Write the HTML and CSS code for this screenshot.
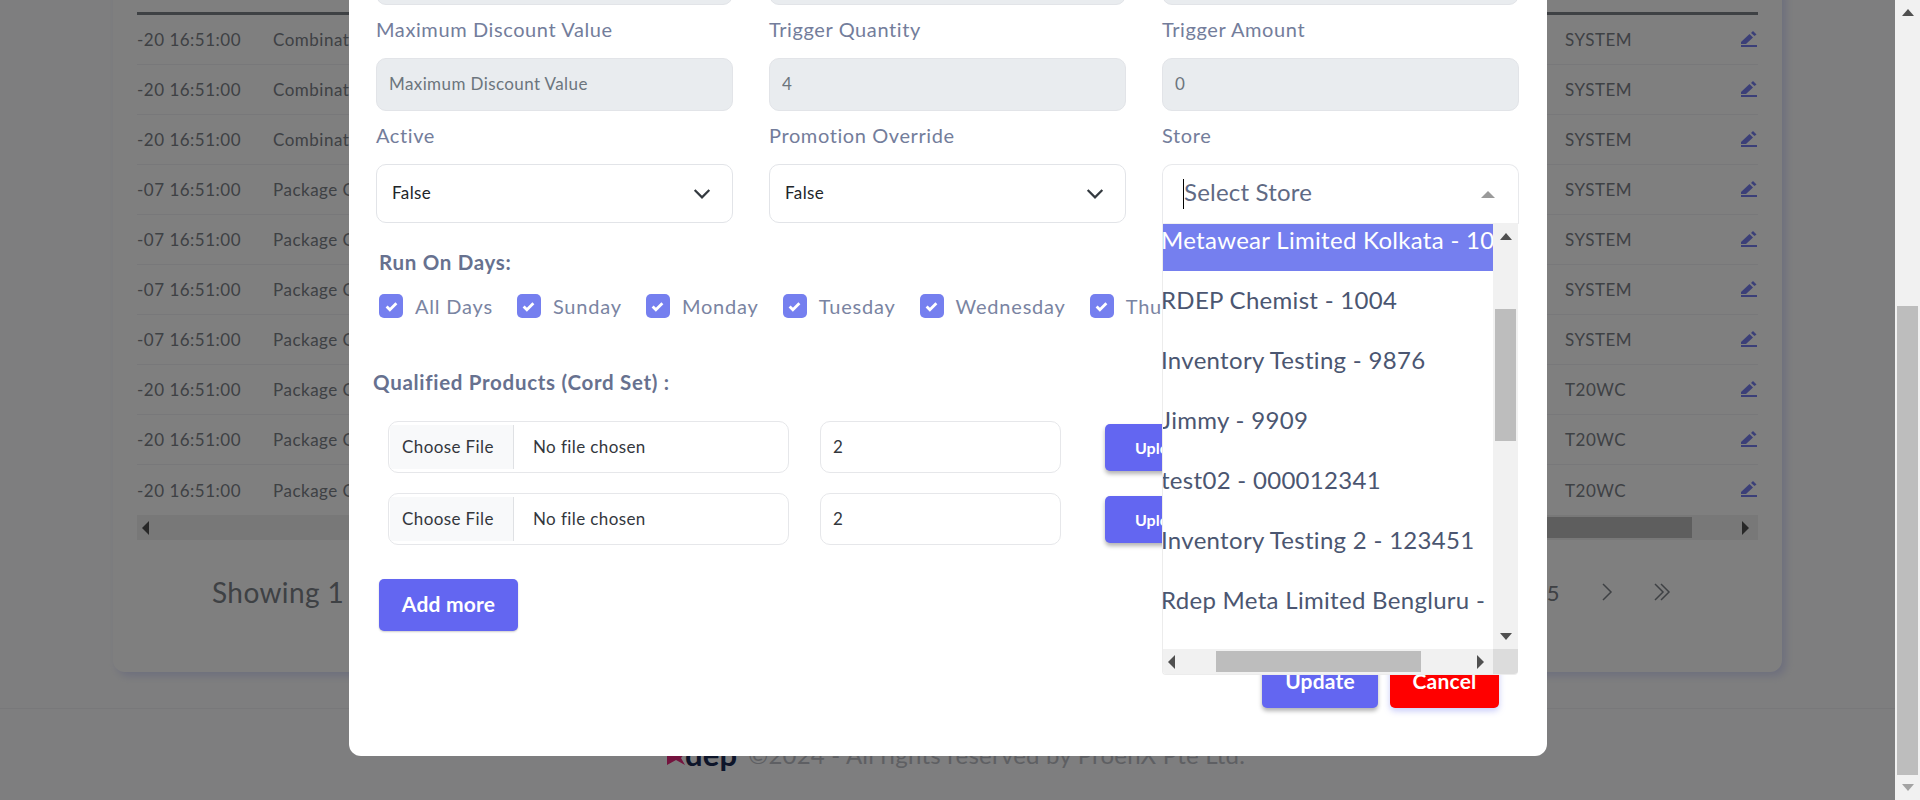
FILE: index.html
```html
<!DOCTYPE html>
<html lang="en">
<head>
<meta charset="utf-8">
<title>Promotions</title>
<link rel="stylesheet" href="styles.css">
</head>
<body>

<div class="page">
  <div class="main">

    <div class="card">
      <div class="table">
        <div class="row"><span class="c-date">-20 16:51:00</span><span class="c-type">Combination</span><span class="c-user">SYSTEM</span><svg class="edit" viewBox="0 0 16 16"><path d="M0 13V11L8.500 3 12 6.500 5 13Z"/><path d="M10 2 12 0 15.500 3.500 13.500 5Z"/><rect y="14" width="16" height="2"/></svg></div>
        <div class="row"><span class="c-date">-20 16:51:00</span><span class="c-type">Combination</span><span class="c-user">SYSTEM</span><svg class="edit" viewBox="0 0 16 16"><path d="M0 13V11L8.500 3 12 6.500 5 13Z"/><path d="M10 2 12 0 15.500 3.500 13.500 5Z"/><rect y="14" width="16" height="2"/></svg></div>
        <div class="row"><span class="c-date">-20 16:51:00</span><span class="c-type">Combination</span><span class="c-user">SYSTEM</span><svg class="edit" viewBox="0 0 16 16"><path d="M0 13V11L8.500 3 12 6.500 5 13Z"/><path d="M10 2 12 0 15.500 3.500 13.500 5Z"/><rect y="14" width="16" height="2"/></svg></div>
        <div class="row"><span class="c-date">-07 16:51:00</span><span class="c-type">Package Qty</span><span class="c-user">SYSTEM</span><svg class="edit" viewBox="0 0 16 16"><path d="M0 13V11L8.500 3 12 6.500 5 13Z"/><path d="M10 2 12 0 15.500 3.500 13.500 5Z"/><rect y="14" width="16" height="2"/></svg></div>
        <div class="row"><span class="c-date">-07 16:51:00</span><span class="c-type">Package Qty</span><span class="c-user">SYSTEM</span><svg class="edit" viewBox="0 0 16 16"><path d="M0 13V11L8.500 3 12 6.500 5 13Z"/><path d="M10 2 12 0 15.500 3.500 13.500 5Z"/><rect y="14" width="16" height="2"/></svg></div>
        <div class="row"><span class="c-date">-07 16:51:00</span><span class="c-type">Package Qty</span><span class="c-user">SYSTEM</span><svg class="edit" viewBox="0 0 16 16"><path d="M0 13V11L8.500 3 12 6.500 5 13Z"/><path d="M10 2 12 0 15.500 3.500 13.500 5Z"/><rect y="14" width="16" height="2"/></svg></div>
        <div class="row"><span class="c-date">-07 16:51:00</span><span class="c-type">Package Qty</span><span class="c-user">SYSTEM</span><svg class="edit" viewBox="0 0 16 16"><path d="M0 13V11L8.500 3 12 6.500 5 13Z"/><path d="M10 2 12 0 15.500 3.500 13.500 5Z"/><rect y="14" width="16" height="2"/></svg></div>
        <div class="row"><span class="c-date">-20 16:51:00</span><span class="c-type">Package Qty</span><span class="c-user">T20WC</span><svg class="edit" viewBox="0 0 16 16"><path d="M0 13V11L8.500 3 12 6.500 5 13Z"/><path d="M10 2 12 0 15.500 3.500 13.500 5Z"/><rect y="14" width="16" height="2"/></svg></div>
        <div class="row"><span class="c-date">-20 16:51:00</span><span class="c-type">Package Qty</span><span class="c-user">T20WC</span><svg class="edit" viewBox="0 0 16 16"><path d="M0 13V11L8.500 3 12 6.500 5 13Z"/><path d="M10 2 12 0 15.500 3.500 13.500 5Z"/><rect y="14" width="16" height="2"/></svg></div>
        <div class="row row-last"><span class="c-date">-20 16:51:00</span><span class="c-type">Package Qty</span><span class="c-user">T20WC</span><svg class="edit" viewBox="0 0 16 16"><path d="M0 13V11L8.500 3 12 6.500 5 13Z"/><path d="M10 2 12 0 15.500 3.500 13.500 5Z"/><rect y="14" width="16" height="2"/></svg></div>
      </div>

      <div class="table-scroll">
        <span class="arrow arrow-left"></span>
        <div class="table-thumb"></div>
        <span class="arrow arrow-right"></span>
      </div>

      <div class="pager">
        <span class="showing">Showing 1 to 10</span>
        <span class="pager-num">5</span>
        <svg class="pager-icon" viewBox="0 0 12 20"><path d="M2 2 10 10 2 18"/></svg>
        <svg class="pager-icon pager-double" viewBox="0 0 18 20"><path d="M2 2 10 10 2 18M8 2 16 10 8 18"/></svg>
      </div>
    </div>

    <div class="footer">
      <span class="logo"><svg class="logo-star" viewBox="0 0 18 20"><path d="M9 0 12 7 18 8 14 13 18 20 9 15 0 20V0Z"/></svg>dep</span>
      <span class="footer-text">©2024 - All rights reserved by ProenX Pte Ltd.</span>
    </div>

    <div class="backdrop"></div>

    <div class="modal">
      <div class="grid">
        <div class="field"><input class="input" disabled></div>
        <div class="field"><input class="input" disabled></div>
        <div class="field"><input class="input" disabled></div>

        <div class="field">
          <label class="label">Maximum Discount Value</label>
          <input class="input" placeholder="Maximum Discount Value" disabled>
        </div>
        <div class="field">
          <label class="label">Trigger Quantity</label>
          <input class="input" value="4" disabled>
        </div>
        <div class="field">
          <label class="label">Trigger Amount</label>
          <input class="input" value="0" disabled>
        </div>

        <div class="field">
          <label class="label">Active</label>
          <div class="select-wrap">
            <select class="select"><option>False</option><option>True</option></select>
            <svg class="chevron" viewBox="0 0 16 16"><path d="M1.500 4.500 8 11 14.500 4.500"/></svg>
          </div>
        </div>
        <div class="field">
          <label class="label">Promotion Override</label>
          <div class="select-wrap">
            <select class="select"><option>False</option><option>True</option></select>
            <svg class="chevron" viewBox="0 0 16 16"><path d="M1.500 4.500 8 11 14.500 4.500"/></svg>
          </div>
        </div>
        <div class="field store">
          <label class="label">Store</label>
          <div class="store-box">
            <span class="caret"></span><span class="store-text">Select Store</span>
            <span class="store-arrow"></span>
          </div>

          <div class="dropdown">
            <div class="dd-body">
              <div class="dd-list">
                <div class="dd-item dd-active">Metawear Limited Kolkata - 1001</div>
                <div class="dd-item">RDEP Chemist - 1004</div>
                <div class="dd-item">Inventory Testing - 9876</div>
                <div class="dd-item">Jimmy - 9909</div>
                <div class="dd-item">test02 - 000012341</div>
                <div class="dd-item">Inventory Testing 2 - 123451</div>
                <div class="dd-item">Rdep Meta Limited Bengluru - 1006</div>
              </div>
              <div class="dd-vbar">
                <span class="arrow arrow-up"></span>
                <div class="dd-vthumb"></div>
                <span class="arrow arrow-down"></span>
              </div>
            </div>
            <div class="dd-hbar">
              <div class="dd-htrack">
                <span class="arrow arrow-left"></span>
                <div class="dd-hthumb"></div>
                <span class="arrow arrow-right"></span>
              </div>
              <div class="dd-corner"></div>
            </div>
          </div>
        </div>
      </div>

      <div class="section-title days-title">Run On Days:</div>
      <div class="days">
        <label class="day"><span class="check"><svg viewBox="0 0 12 10"><path d="M1.500 5 4.500 8 10.500 2"/></svg></span>All Days</label>
        <label class="day"><span class="check"><svg viewBox="0 0 12 10"><path d="M1.500 5 4.500 8 10.500 2"/></svg></span>Sunday</label>
        <label class="day"><span class="check"><svg viewBox="0 0 12 10"><path d="M1.500 5 4.500 8 10.500 2"/></svg></span>Monday</label>
        <label class="day"><span class="check"><svg viewBox="0 0 12 10"><path d="M1.500 5 4.500 8 10.500 2"/></svg></span>Tuesday</label>
        <label class="day"><span class="check"><svg viewBox="0 0 12 10"><path d="M1.500 5 4.500 8 10.500 2"/></svg></span>Wednesday</label>
        <label class="day"><span class="check"><svg viewBox="0 0 12 10"><path d="M1.500 5 4.500 8 10.500 2"/></svg></span>Thursday</label>
      </div>

      <div class="section-title products-title">Qualified Products (Cord Set) :</div>
      <div class="upload-row">
        <input class="file" type="file">
        <input class="qty" value="2">
        <button class="btn btn-upload">Upload</button>
      </div>
      <div class="upload-row">
        <input class="file" type="file">
        <input class="qty" value="2">
        <button class="btn btn-upload">Upload</button>
      </div>

      <button class="btn btn-add">Add more</button>

      <div class="actions">
        <button class="btn btn-update">Update</button>
        <button class="btn btn-cancel">Cancel</button>
      </div>
    </div>

  </div>

  <div class="page-scrollbar">
    <span class="arrow arrow-up arrow-muted"></span>
    <div class="page-thumb"></div>
    <span class="arrow arrow-down arrow-muted"></span>
  </div>
</div>

</body>
</html>
```

FILE: styles.css
```css
* {
    box-sizing: border-box;
}

body {
    margin: 0;
    font-family: 'Lato', 'Noto Sans', sans-serif;
    font-size: 17px;
    letter-spacing: 0.4px;
    background-color: #fdfdfe;
    overflow: hidden;
}

.page {
    display: flex;
    height: 800px;
}

.main {
    position: relative;
    flex: 1;
    overflow: hidden;
}

/* table behind the modal */
.card {
    width: 1669px;
    height: 692px;
    margin: -20px 0 0 113px;
    padding: 32px 24px 0 24px;
    background-color: #ffffff;
    border-radius: 12px;
    box-shadow: 4px 4px 8px rgba(117, 127, 239, 0.25);
}

.table {
    border-top: 3px solid #7d8289;
}

.row {
    display: flex;
    align-items: center;
    height: 50px;
    border-bottom: 1px solid #f1f1f4;
    letter-spacing: 0.5px;
    color: #7d8289;
}

.row-last {
    border-bottom: 0;
}

.c-date {
    width: 136px;
}

.c-type {
    flex: 1;
}

.c-user {
    width: 176px;
}

.edit {
    width: 16px;
    height: 16px;
    margin: 0 1px 2px 0;
    fill: #767ff0;
}

.table-scroll {
    display: flex;
    align-items: center;
    height: 25px;
    background-color: #f1f1f1;
}

.table-thumb {
    flex: 1;
    height: 21px;
    margin: 0 50px 0 400px;
    background-color: #bdbdbd;
}

.arrow {
    flex: none;
    display: block;
    width: 0;
    height: 0;
    border: 5px solid transparent;
}

.arrow-left {
    margin-left: 5px;
    border-left-width: 0;
    border-right: 7px solid #505050;
    border-top-width: 7px;
    border-bottom-width: 7px;
}

.arrow-right {
    margin-right: 9px;
    border-right-width: 0;
    border-left: 7px solid #505050;
    border-top-width: 7px;
    border-bottom-width: 7px;
}

.arrow-up {
    border-top-width: 0;
    border-left-width: 6px;
    border-right-width: 6px;
    border-bottom: 7px solid #505050;
}

.arrow-down {
    border-bottom-width: 0;
    border-left-width: 6px;
    border-right-width: 6px;
    border-top: 7px solid #505050;
}

.arrow-muted.arrow-down {
    border-top-color: #a3a3a3;
}

.pager {
    display: flex;
    align-items: center;
    height: 104px;
    padding: 0 0 0 75px;
    color: #7d8289;
}

.showing {
    flex: 1;
    font-size: 28px;
}

.pager-num {
    font-size: 22px;
    margin-right: 41px;
}

.pager-icon {
    width: 12px;
    height: 20px;
    margin-right: 40px;
    fill: none;
    stroke: #7d8289;
    stroke-width: 1.500;
}

.pager-double {
    width: 18px;
    margin-right: 87px;
}

.footer {
    display: flex;
    justify-content: center;
    align-items: center;
    gap: 11px;
    height: 92px;
    margin-top: 36px;
    padding-left: 17px;
    border-top: 1px solid #f1f1f4;
    letter-spacing: 0.2px;
    color: #bcbfc6;
    font-size: 24px;
}

.logo {
    display: flex;
    align-items: center;
    color: #1a2a55;
    font-size: 31px;
    font-weight: 700;
    line-height: 1;
}

.logo-star {
    width: 18px;
    height: 20px;
    fill: #e8267c;
}

/* overlay and modal */
.backdrop {
    position: absolute;
    top: 0;
    right: 0;
    bottom: 0;
    left: 0;
    background-color: rgba(0, 0, 0, 0.5);
}

.modal {
    position: absolute;
    top: -48px;
    left: 349px;
    width: 1198px;
    height: 804px;
    padding: 0 28px 0 27px;
    background-color: #ffffff;
    border-radius: 0 0 12px 12px;
    color: #6b7595;
}

.grid {
    display: grid;
    grid-template-columns: repeat(3, 1fr);
    column-gap: 36px;
}

.field {
    margin-bottom: 11px;
}

.label {
    display: block;
    height: 28px;
    margin-bottom: 14px;
    line-height: 26px;
    font-size: 20px;
    letter-spacing: 0.6px;
    color: #737d9b;
}

.input {
    display: block;
    width: 100%;
    height: 53px;
    padding: 0 12px 3px 12px;
    border: 1px solid #e2e4e8;
    border-radius: 10px;
    background-color: #e9ecef;
    font: inherit;
    letter-spacing: inherit;
    color: #6c757d;
}

.input::placeholder {
    color: #6c757d;
}

.select-wrap {
    position: relative;
    margin-top: 1px;
}

.select {
    display: block;
    width: 100%;
    height: 59px;
    padding: 0 15px 2px 15px;
    border: 1px solid #e2e4e8;
    border-radius: 10px;
    background-color: #ffffff;
    appearance: none;
    font: inherit;
    letter-spacing: inherit;
    color: #212529;
}

.chevron {
    position: absolute;
    top: 21px;
    right: 22px;
    width: 18px;
    height: 18px;
    fill: none;
    stroke: #343a40;
    stroke-width: 2;
}

.store {
    position: relative;
}

.store-box {
    display: flex;
    align-items: center;
    height: 60px;
    margin-top: 1px;
    padding: 0 20px;
    border: 1px solid #e8e9ec;
    border-bottom-color: #f1f1f1;
    border-radius: 10px 10px 0 0;
    font-size: 24px;
    letter-spacing: 0.2px;
    color: #5f6a84;
}

.store-text {
    padding-bottom: 5px;
}

.caret {
    width: 1px;
    height: 30px;
    background-color: #000000;
}

.store-arrow {
    width: 0;
    height: 0;
    margin-left: auto;
    margin-right: 3px;
    border-style: solid;
    border-color: transparent transparent #9a9a9a transparent;
    border-width: 0 7px 7px 7px;
}

.dropdown {
    position: absolute;
    top: 102px;
    left: 0;
    z-index: 5;
    width: 356px;
    height: 451px;
    overflow: hidden;
    border-left: 1px solid #ececec;
    border-bottom: 1px solid #ececec;
    background-color: #ffffff;
    border-radius: 0 0 4px 4px;
}

.dd-body {
    display: flex;
    height: 425px;
}

.dd-list {
    width: 330px;
    overflow: hidden;
    font-size: 24px;
    letter-spacing: 0.3px;
    color: #4b5671;
    white-space: nowrap;
}

.dd-item {
    height: 60px;
    line-height: 58px;
    text-indent: -2px;
}

.dd-active {
    height: 47px;
    line-height: 32px;
    background-color: #757fef;
    color: #ffffff;
}

.dd-vbar {
    position: relative;
    display: flex;
    flex-direction: column;
    align-items: center;
    justify-content: space-between;
    width: 25px;
    padding: 9px 0;
    background-color: #f1f1f1;
}

.dd-vthumb {
    position: absolute;
    top: 85px;
    left: 2px;
    width: 21px;
    height: 132px;
    background-color: #bdbdbd;
}

.dd-hbar {
    display: flex;
    height: 25px;
}

.dd-htrack {
    display: flex;
    align-items: center;
    width: 330px;
    background-color: #f1f1f1;
}

.dd-hthumb {
    width: 205px;
    height: 21px;
    margin: 0 auto 0 41px;
    background-color: #bdbdbd;
}

.dd-corner {
    flex: 1;
    background-color: #dcdcdc;
}

.section-title {
    font-size: 20.500px;
    letter-spacing: 0.7px;
    font-weight: 700;
    color: #67718f;
}

.days-title {
    margin: 14px 0 0 3px;
    line-height: 26px;
}

.days {
    display: flex;
    gap: 24px;
    margin: 19px 0 0 3px;
    white-space: nowrap;
}

.day {
    display: flex;
    align-items: center;
    gap: 12px;
    height: 24px;
    font-size: 20px;
    letter-spacing: 0.8px;
    color: #7a84a2;
}

.check {
    display: flex;
    align-items: center;
    justify-content: center;
    width: 24px;
    height: 24px;
    border-radius: 5px;
    background-color: #757fef;
}

.check svg {
    width: 13px;
    height: 11px;
    fill: none;
    stroke: #ffffff;
    stroke-width: 2.600;
}

.products-title {
    margin: 51px 0 26px -3px;
    line-height: 26px;
}

.upload-row {
    display: flex;
    align-items: center;
    height: 52px;
    margin: 0 0 20px 12px;
}

.file {
    width: 401px;
    height: 52px;
    padding: 3px 0 3px 1px;
    border: 1px solid #e6e7ea;
    border-radius: 10px;
    font: inherit;
    letter-spacing: inherit;
    color: #33373d;
}

.file::file-selector-button {
    height: 44px;
    width: 124px;
    margin-right: 19px;
    padding: 0 0 2px 12px;
    border: 0;
    border-right: 1px solid #dfe1e4;
    background-color: #f8f9fa;
    font: inherit;
    letter-spacing: inherit;
    text-align: left;
    color: #33373d;
}

.qty {
    width: 241px;
    height: 52px;
    margin-left: 31px;
    padding: 0 12px 2px 12px;
    border: 1px solid #e6e7ea;
    border-radius: 10px;
    font: inherit;
    letter-spacing: inherit;
    color: #33373d;
}

.btn {
    border: 0;
    border-radius: 5px;
    background-color: #6366f1;
    box-shadow: 0 3px 4px rgba(0, 0, 0, 0.3);
    font-family: inherit;
    font-weight: 700;
    color: #ffffff;
}

.btn-upload {
    width: 140px;
    height: 47px;
    margin-left: 44px;
    padding-left: 30px;
    font-size: 16px;
    text-align: left;
}

.btn-add {
    display: block;
    width: 139px;
    height: 52px;
    margin: 34px 0 0 3px;
    padding-bottom: 5px;
    font-size: 21px;
    letter-spacing: 0.2px;
    box-shadow: 0 1px 2px rgba(0, 0, 0, 0.2);
}

.actions {
    display: flex;
    justify-content: flex-end;
    gap: 12px;
    margin: 25px 20px 0 0;
}

.btn-update {
    width: 116px;
    height: 52px;
    padding-bottom: 5px;
    font-size: 21px;
    letter-spacing: 0.2px;
}

.btn-cancel {
    width: 109px;
    height: 52px;
    padding-bottom: 5px;
    background-color: #ff0000;
    font-size: 21px;
    letter-spacing: 0.2px;
    box-shadow: 0 3px 6px rgba(117, 127, 239, 0.4);
}

/* browser scrollbar, stays above the overlay */
.page-scrollbar {
    position: relative;
    display: flex;
    flex-direction: column;
    align-items: center;
    justify-content: space-between;
    width: 25px;
    padding: 9px 0;
    background-color: #f1f1f1;
}

.page-thumb {
    position: absolute;
    top: 306px;
    left: 2px;
    width: 21px;
    height: 469px;
    background-color: #bdbdbd;
}
```
